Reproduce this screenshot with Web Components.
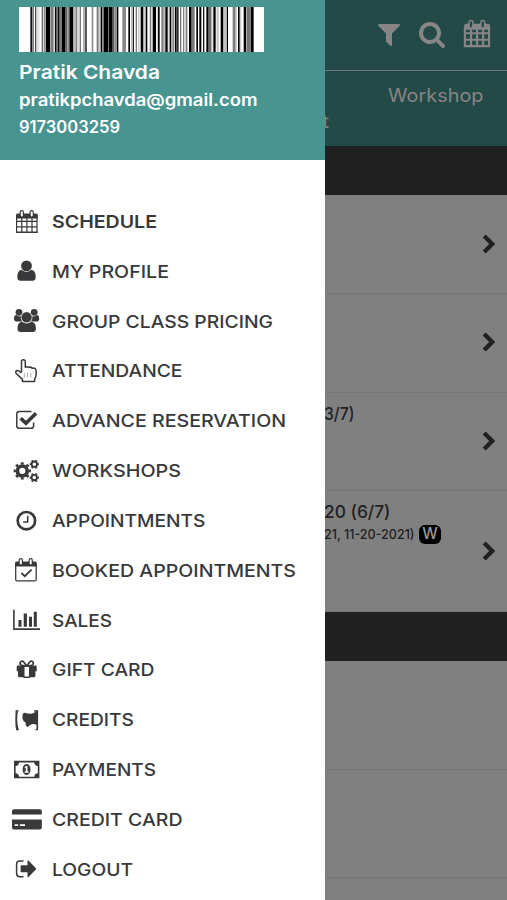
<!DOCTYPE html>
<html lang="en"><head><meta charset="utf-8"><title>Schedule</title>
<style>html,body{margin:0;height:900px;overflow:hidden}body{font-family:Inter,"Open Sans",sans-serif;background:#808080}</style></head>
<body>
<studio-app></studio-app>
<script>
// Text scaled horizontally so that it fills the width given in "w".
class FitText extends HTMLElement{
  connectedCallback(){
    const r=this.attachShadow({mode:'open'});
    r.innerHTML='<style>:host{display:block;white-space:nowrap;width:max-content}span{display:inline-block;transform-origin:0 50%}</style><span><slot></slot></span>';
    const s=r.querySelector('span'),n=s.getBoundingClientRect().width;
    if(n){s.style.transform=`scaleX(${this.getAttribute('w')/n})`;this.style.width=this.getAttribute('w')+'px'}
  }
}
customElements.define('fit-text',FitText);

const gear=(x,y,r,n,w,t)=>`<g fill="none" stroke="currentColor"><circle cx="${x}" cy="${y}" r="${r}" stroke-width="${w}"/><circle cx="${x}" cy="${y}" r="${r+w/2+t/2-.3}" stroke-width="${t}" pathLength="${n*2}" stroke-dasharray="1 1" stroke-dashoffset=".5"/></g>`;
const grid='<path d="M6.6 10v16.2h20.4V10M6.8 15.4H27M6.8 20.8H27M11.8 12v14M16.9 12v14M22 12v14" fill="none" stroke="currentColor" stroke-width="var(--line,1.2)"/>';
const rings='<path d="M6 9q0-1.6 1.6-1.6h18.600q1.600 0 1.600 1.600v3.500H6z"/><g fill="var(--hole,#fff)" stroke="currentColor" stroke-width="1.200"><rect x="10.200" y="4.600" width="3.200" height="6.400" rx="1.600"/><rect x="20.100" y="4.600" width="3.200" height="6.400" rx="1.600"/></g>';
const ICONS={
calendar:grid+rings+'<path d="M6.400 25.500v1h21v-1" fill="none" stroke="currentColor"/>',
user:'<circle cx="16.500" cy="10.900" r="5.400"/><path d="M11.500 14.800q5 4.200 10 0 4.200.7 4.200 7.200 0 3.800-3 3.800H10.300q-3 0-3-3.800 0-6.500 4.200-7.200z"/>',
group:'<circle cx="9" cy="7.300" r="3.400"/><circle cx="24.200" cy="7.300" r="3.400"/><path d="M6.200 10q3 2.400 5.200.8-.8 3.200.8 5.800H7q-3 0-3-2.800Q4 10 6.200 10zM27 10q-3 2.400-5.200.8.8 3.200-.8 5.800h5.200q3 0 3-2.800Q29.200 10 27 10z"/><circle cx="16.600" cy="12.300" r="5.500" stroke="#fff" stroke-width=".6"/><path d="M11.800 16.800q4.900 3.500 9.700 0 4.400.6 4.400 6.600 0 3.500-3 3.500H10.500q-3 0-3-3.500 0-6 4.300-6.600z"/>',
hand:'<g fill="none" stroke="currentColor" stroke-width="1.500" stroke-linejoin="round"><path d="M11.500 17V6.700q0-2 1.900-2t1.900 2v5.500q1.200-1.200 3.500.2 2-.8 3.400.8 3.900-.7 3.900 3v3.500q0 2-1.500 4.400v2.500H12.500v-2.200L6.200 18.500q-1.200-2 .7-3 1.800-.6 4.600 2.500"/><path d="M14.300 18v4.500M17.500 18v4.500M20.800 18v4.500" stroke-width=".8" opacity=".55"/></g>',
check:'<path d="M23.600 17.500v3.200q0 2.600-2.600 2.600H9.400q-2.600 0-2.600-2.600V9q0-2.600 2.600-2.600H21.500" fill="none" stroke="currentColor" stroke-width="1.500"/><path d="M9.300 14.500l2.700-2.600 4 3.800 8.800-8.700L27.300 9.600 16 20.800z"/>',
cogs:gear(12.3,15.9,4.900,8,3.700,2.200)+gear(24.300,9.200,2.700,6,1.900,1.300)+gear(24.300,22.600,2.700,6,1.900,1.300),
clock:'<circle cx="16.400" cy="15.700" r="8.700" fill="none" stroke="currentColor" stroke-width="2.700"/><path d="M17.700 10.700v6.200h-4.500" fill="none" stroke="currentColor" stroke-width="1.500"/>',
booked:'<g transform="translate(-1 0)"><path d="M6.700 10v15.400q0 1.500 1.500 1.500h17.500q1.500 0 1.500-1.500V10" fill="none" stroke="currentColor" stroke-width="1.300"/>'+rings+'<path d="M12.300 18.800l3.500 3.400 6.800-6.600" fill="none" stroke="currentColor" stroke-width="1.800"/></g>',
chart:'<path d="M3.900 5.700v19.400H30" fill="none" stroke="currentColor" stroke-width="1.600"/><path d="M8.500 16h3v6.700h-3zM13.700 9.600h3.200v13.100h-3.200zM19 12.700h3v10h-3zM23.800 7.700h3v15h-3z"/>',
gift:'<g fill="none" stroke="currentColor" stroke-width="1.700"><path d="M16.700 12l-3-4q-1.300-1.300-2.800-.4-1.500 1.200-.4 2.900.7 1 2.200 1zM16.700 12l3-4q1.300-1.300 2.800-.4 1.500 1.200.4 2.900-.7 1-2.200 1z"/></g><path d="M7.500 11.500h7v11.800H9.500q-1.500 0-1.500-1.500v-4.500H6.700v-5.100zM19 11.500h6.900l.8.700v5.100h-1.300v4.500q0 1.500-1.500 1.500H19zM13.500 22.500h6.400v1.400h-6.400zM13.500 11.300h6.400v1.500h-6.400z"/>',
ticket:'<path d="M5.600 6.200h2.900v1.200H7.800Q7.200 12 7.200 16t1.300 9.100h.4v1.200H6.200Q5.300 22 5.300 16z"/><path d="M12.800 9.800q2-1.800 4.300-.4l3.800.4q3.700-.8 4.600-2.400h-1.500V6.200h4.100v20h-2.600V25h1v-4.300q-4.300-1.500-6 .2l-3.300 2q-2-1-1.700-4.500-2.700-1.500-3.200-4.500z"/>',
money:'<path fill-rule="evenodd" d="M4 6.800h25.400v17.400H4zM5.600 12v7.200q3.300.3 3.400 3.500h15.300q.1-3.200 3.500-3.500V12q-3.400-.3-3.500-3.600H9q-.1 3.300-3.400 3.600z"/><path fill-rule="evenodd" d="M16.600 10c5.300 0 5.300 11 0 11s-5.300-11 0-11zM14.800 12.800v1.500h1v3.300h-1.300v1.200h4.200v-1.200h-1.200V12h-1.200z"/>',
card:'<path d="M2 10.500V7.300q0-2 2-2h25.800q2 0 2 2v3.200zM2 15.500h29.800v8.100q0 2-2 2H4q-2 0-2-2z"/><path d="M4.700 21.200h3.500M10 21.200h5" stroke="#fff" stroke-width="1.700"/>',
logout:'<path d="M13.500 7.900H9.800q-3.200 0-3.200 3.200v9.400q0 3.200 3.200 3.200h3.700" fill="none" stroke="currentColor" stroke-width="1.500"/><path d="M11.500 12.300h6V8q.2-1 1-.4l7.400 7.600q.5.600 0 1.200l-7.400 7.600q-.8.600-1-.4v-4.300h-6q-.9 0-.9-.9v-5.200q0-.9.900-.9z"/>'};
class AppIcon extends HTMLElement{
  connectedCallback(){this.attachShadow({mode:'open'}).innerHTML='<style>:host{display:block;width:32px;height:32px}svg{display:block;width:100%;height:100%;overflow:visible}path{stroke-width:attr(x)}</style><svg viewBox="0 0 32 32" fill="currentColor">'.replace('path{stroke-width:attr(x)}','')+ICONS[this.getAttribute('name')].replace('stroke-width="var(--line,1.2)"','style="stroke-width:var(--line,1.2px)"').replace('fill="var(--hole,#fff)"','style="fill:var(--hole,#fff)"')+'</svg>'}
}
customElements.define('app-icon',AppIcon);

// Bars as [start, end, grey level], in thirds of a pixel from the left edge of the code.
const BARS=[[34,40,20],[40,45,130],[48,52,80],[52,56,200],[58,61,215],[68,72,110],[74,78,140],[80,93,0],[93,96,170],[96,104,120],[104,107,200],[108,113,5],[113,117,120],[117,122,10],[122,128,130],[128,138,0],[138,145,100],[145,150,140],[151,163,0],[163,167,160],[169,175,130],[178,181,200],[182,186,120],[193,197,140],[199,203,5],[218,223,140],[233,239,120],[239,244,200],[245,249,0],[249,254,140],[254,267,0],[267,270,120],[270,281,0],[281,286,90],[286,292,140],[293,298,0],[310,321,135],[328,333,0],[336,339,190],[341,345,30],[350,354,120],[358,361,180],[365,373,0],[375,379,210],[380,385,0],[392,397,130],[401,411,0],[413,416,200],[417,422,0],[427,434,125],[434,438,185],[439,446,0],[448,451,205],[452,457,0],[460,466,130],[468,473,0],[474,479,50],[483,487,120],[492,496,130],[500,505,120],[510,518,0],[518,527,120],[532,537,0],[541,547,0],[552,556,20],[562,569,0],[569,576,110],[576,580,185],[583,590,0],[593,599,190],[605,613,0],[615,621,195],[623,627,0],[641,650,125],[650,653,190],[657,662,0],[663,667,205],[674,682,0],[684,694,115],[695,704,0]];
class BarCode extends HTMLElement{
  connectedCallback(){this.attachShadow({mode:'open'}).innerHTML='<style>:host{display:block;width:245px;height:45px}svg{display:block}</style><svg width="245" height="45" viewBox="0 0 735 135" preserveAspectRatio="none"><path fill="#fff" d="M0 0h735v135H0z"/>'+BARS.map(([a,b,g])=>`<path fill="rgb(${g},${g},${g})" d="M${a} 0h${b-a}v135h-${b-a}z"/>`).join('')+'</svg>'}
}
customElements.define('bar-code',BarCode);

class MenuItem extends HTMLElement{
  connectedCallback(){this.attachShadow({mode:'open'}).innerHTML=`<style>:host{display:flex;align-items:center;gap:10.700px;height:49.850px;padding-left:9.800px;color:#39393b;font-size:17.800px;font-weight:450}:host([active]){font-weight:600}fit-text{margin-top:-.3px}</style><app-icon name="${this.getAttribute('icon')}"></app-icon><fit-text w="${this.getAttribute('w')}">${this.getAttribute('label')}</fit-text>`}
}
customElements.define('menu-item',MenuItem);

class SideDrawer extends HTMLElement{
  connectedCallback(){
    const items=[['calendar','SCHEDULE',105],['user','MY PROFILE',117],['group','GROUP CLASS PRICING',221],['hand','ATTENDANCE',130.5],['check','ADVANCE RESERVATION',234],['cogs','WORKSHOPS',129],['clock','APPOINTMENTS',153.5],['booked','BOOKED APPOINTMENTS',244],['chart','SALES',60],['gift','GIFT CARD',102.5],['ticket','CREDITS',82],['money','PAYMENTS',104],['card','CREDIT CARD',130.5],['logout','LOGOUT',81]];
    this.attachShadow({mode:'open'}).innerHTML=`<style>:host{display:flex;flex-direction:column;width:325px;height:900px;background:#fff}
    header{box-sizing:border-box;height:160px;padding:6.700px 0 0 19.400px;background:#479490;color:#fff;font-weight:600}
    .name{font-size:19px;line-height:28px;margin-top:7px}.mail,.tel{font-size:16.800px;line-height:27px}.mail{margin-top:.3px}nav{padding-top:36.600px}</style>
    <header><bar-code></bar-code><fit-text class="name" w="141">Pratik Chavda</fit-text><fit-text class="mail" w="238.500">pratikpchavda@gmail.com</fit-text><fit-text class="tel" w="101">9173003259</fit-text></header>
    <nav>${items.map((i,n)=>`<menu-item icon="${i[0]}" label="${i[1]}" w="${i[2]}" ${n?'':'active'}></menu-item>`).join('')}</nav>`}
}
customElements.define('side-drawer',SideDrawer);

class TopBar extends HTMLElement{
  connectedCallback(){this.attachShadow({mode:'open'}).innerHTML=`<style>:host{display:block;height:145.500px;background:#244a48;color:#888587;--hole:#244a48;--line:1.8px}
  .tools{box-sizing:border-box;height:70.500px;border-bottom:1.500px solid #6b7e7d;display:flex;justify-content:flex-end;align-items:center;padding:0 14px 2px 0}
  .f{width:28px;height:28px;margin-right:15px}.s{width:28px;height:28px;margin-right:11px}app-icon{width:38px;height:38px;margin-right:-2px}
  .tabs{display:flex;flex-direction:column;align-items:flex-end;padding:12px 24px 0 0;font-size:18px;line-height:26px}.tabs fit-text+fit-text{margin-right:154px}</style>
  <div class="tools"><svg class="f" viewBox="0 0 1792 1792" fill="currentColor"><path d="M1595 295q17 41-14 70l-493 493v742q0 42-39 59-13 5-25 5-27 0-45-19l-256-256q-19-19-19-45v-486l-493-493q-31-29-14-70 17-39 59-39h1280q42 0 59 39z"/></svg>
  <svg class="s" viewBox="0 0 1792 1792" fill="currentColor"><path d="M1216 832q0-185-131.500-316.500t-316.500-131.500-316.500 131.500-131.500 316.500 131.500 316.500 316.500 131.500 316.500-131.500 131.500-316.500zm512 832q0 52-38 90t-90 38q-54 0-90-38l-343-342q-179 124-399 124-143 0-273.500-55.500t-225-150-150-225-55.500-273.500 55.500-273.500 150-225 225-150 273.500-55.500 273.500 55.500 225 150 150 225 55.500 273.500q0 220-124 399l343 343q37 37 37 90z"/></svg><app-icon name="calendar"></app-icon></div>
  <div class="tabs"><fit-text w="95.500">Workshop</fit-text><fit-text w="7">t</fit-text></div>`}
}
customElements.define('top-bar',TopBar);

class ClassRow extends HTMLElement{
  connectedCallback(){this.attachShadow({mode:'open'}).innerHTML=`<style>:host{box-sizing:border-box;display:flex;justify-content:space-between;align-items:center;border-bottom:1px solid #767676;padding:0 10.700px 0 323.500px;color:#202022}.c{align-self:flex-start;padding-top:8px}svg{width:15px;height:20px;margin-top:-.5px}</style>
  <div class="c"><slot></slot></div>${this.hasAttribute('plain')?'':'<svg viewBox="0 0 15 20"><path d="M3.200 2l8 8-8 8" fill="none" stroke="currentColor" stroke-width="4.300"/></svg>'}`}
}
customElements.define('class-row',ClassRow);

class StudioApp extends HTMLElement{
  connectedCallback(){this.attachShadow({mode:'open'}).innerHTML=`<style>:host{display:block;position:relative;width:507px;height:900px;overflow:hidden;background:#808080}
  .day{height:49.500px;background:#202020}.title{font-size:17.500px;font-weight:500;line-height:25px}.dates{display:flex;align-items:center;gap:5px;font-size:13.500px;font-weight:500;line-height:20px}
  b{display:flex;align-items:center;justify-content:center;width:22px;height:19px;border-radius:6px;background:#000;color:#999;font-size:15.500px;font-weight:500}
  side-drawer{position:absolute;left:0;top:0}</style>
  <top-bar></top-bar><div class="day"></div>
  <class-row style="height:98.500px"></class-row><class-row style="height:99px"></class-row>
  <class-row style="height:98.500px"><fit-text class="title" w="30.500">3/7)</fit-text></class-row>
  <class-row style="height:120.500px"><fit-text class="title" w="66.500">20 (6/7)</fit-text><div class="dates"><fit-text w="90.500">21, 11-20-2021)</fit-text><b>W</b></div></class-row>
  <div class="day"></div><class-row plain style="height:108.500px"></class-row><class-row plain style="height:108px"></class-row>
  <side-drawer></side-drawer>`}
}
customElements.define('studio-app',StudioApp);
</script></body></html>
